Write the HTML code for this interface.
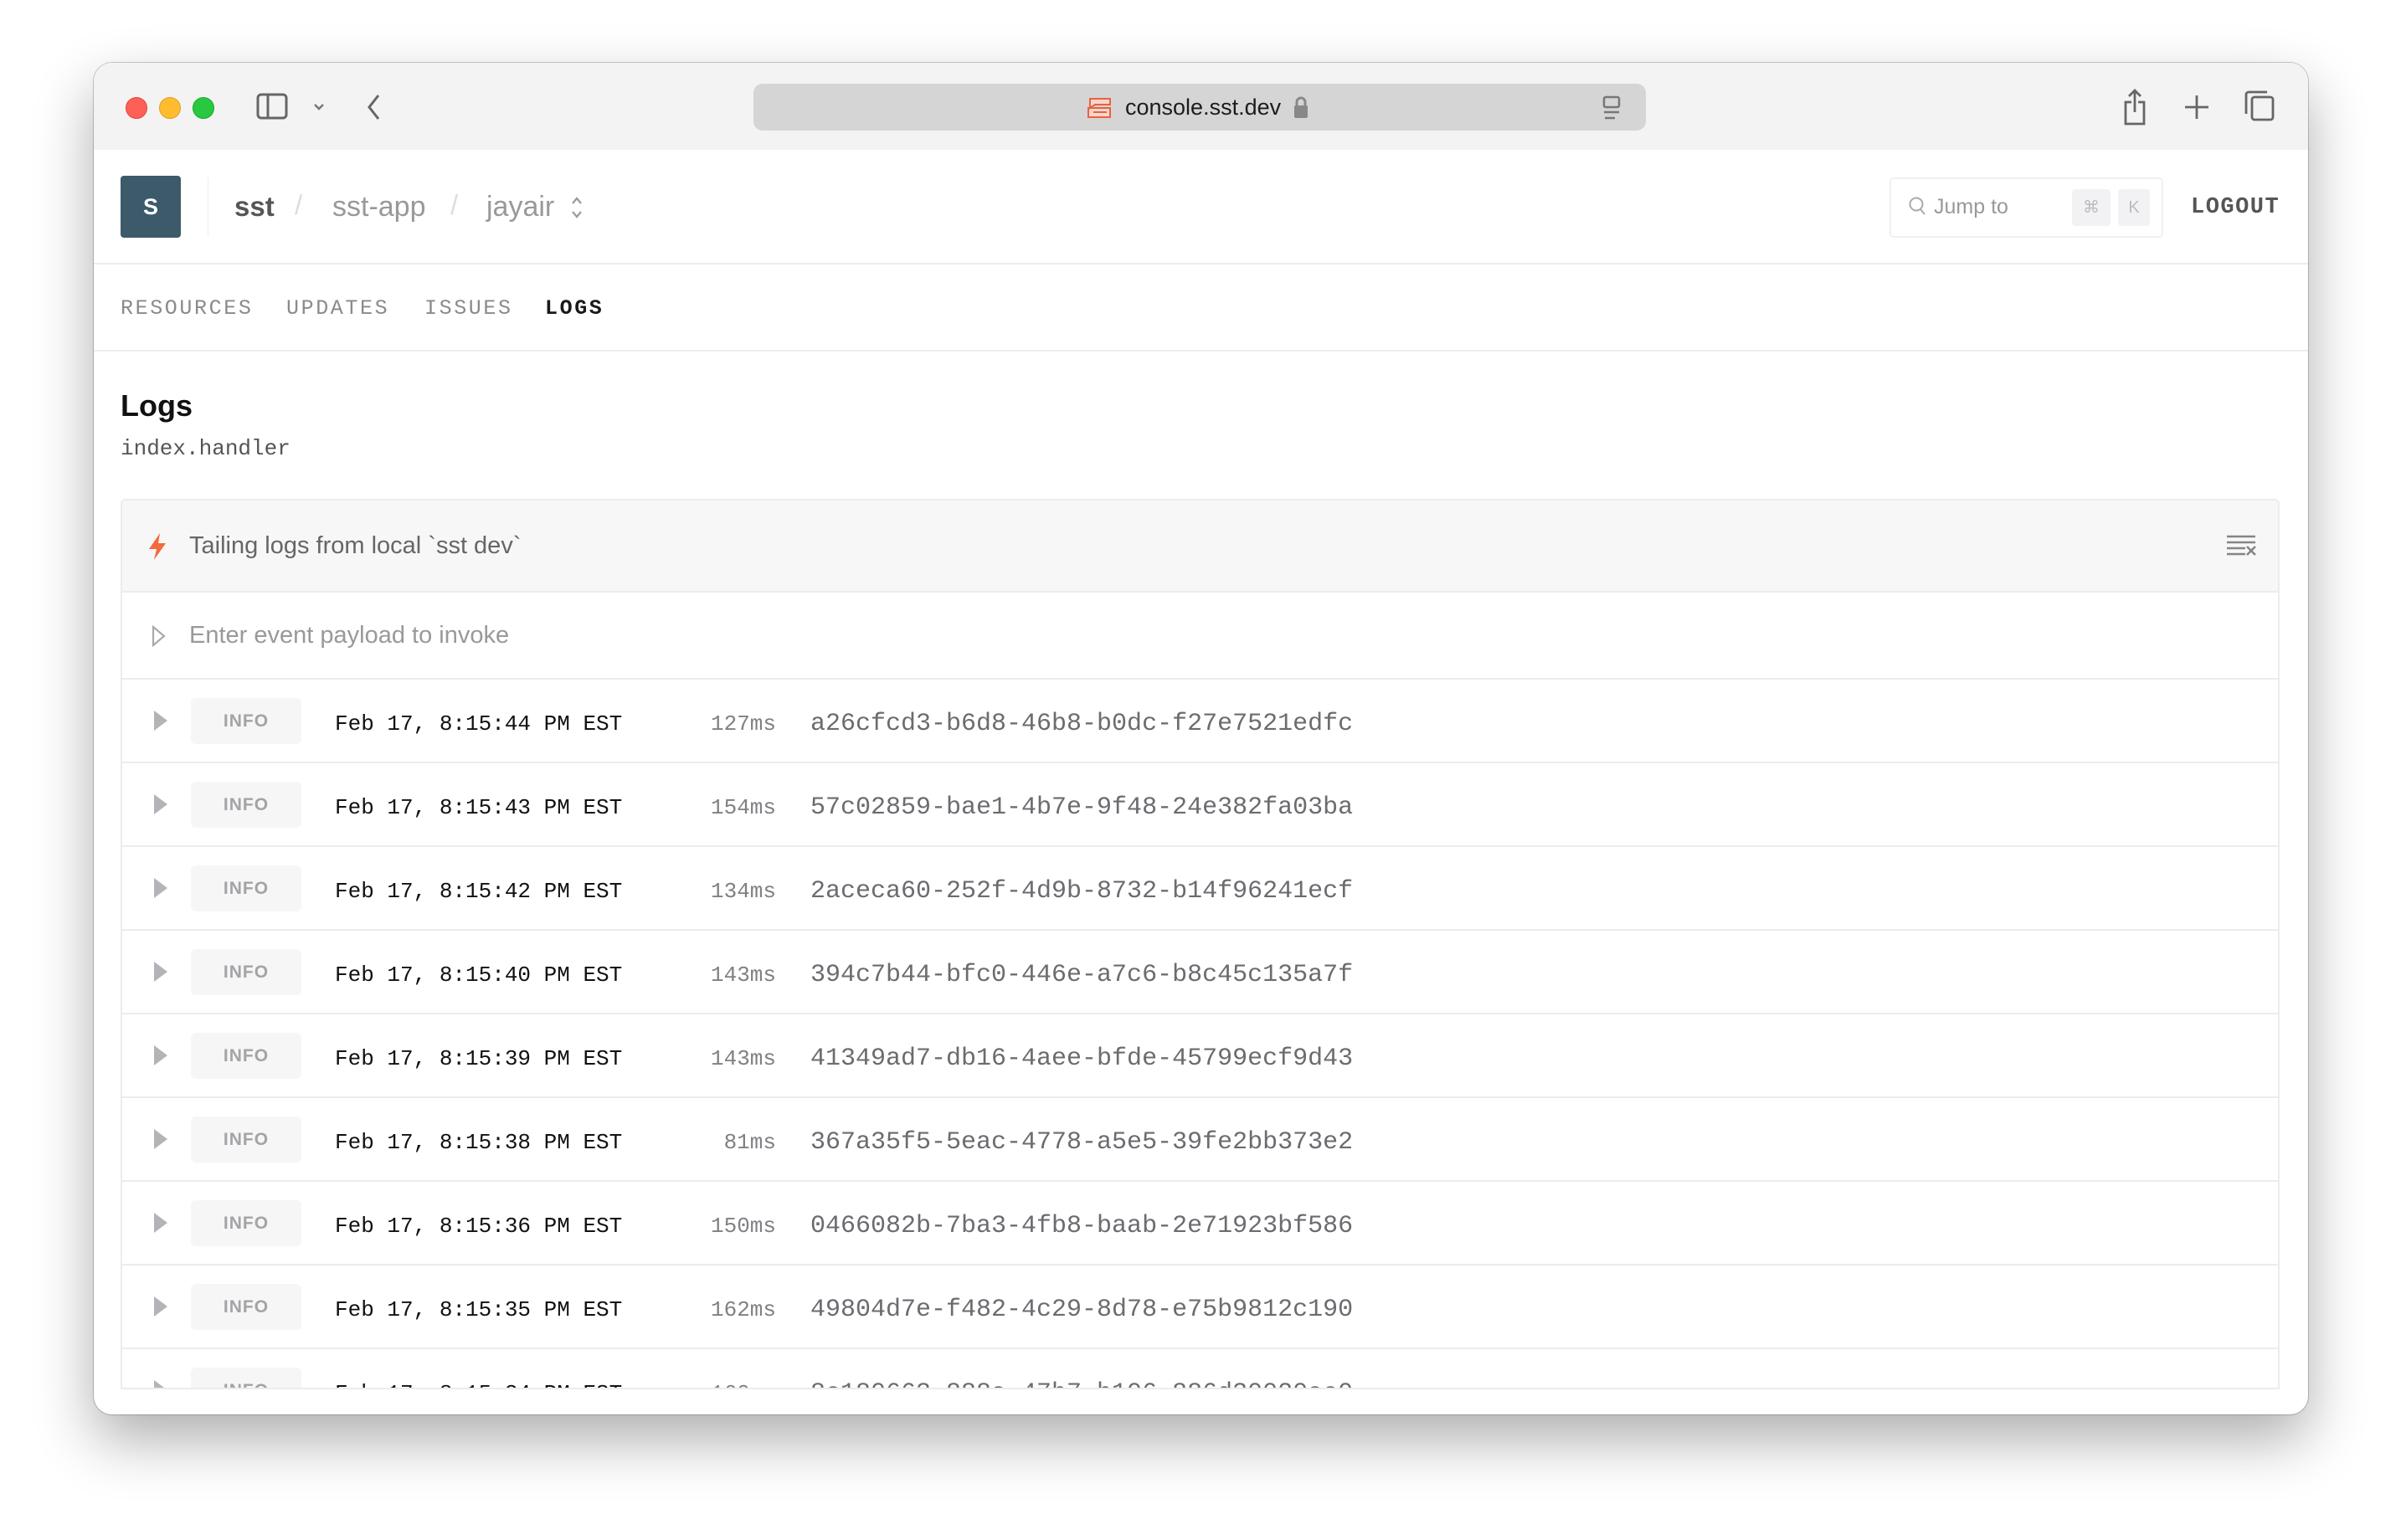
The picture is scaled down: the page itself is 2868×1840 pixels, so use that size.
<!DOCTYPE html>
<html><head><meta charset="utf-8"><style>
*{box-sizing:border-box;margin:0;padding:0}
body{width:2868px;height:1840px;background:#fff;position:relative;overflow:hidden;font-family:"Liberation Sans",sans-serif}
.win{position:absolute;left:112px;top:75px;width:2645px;height:1615px;border-radius:22px;background:#fff;overflow:hidden;box-shadow:0 30px 70px rgba(0,0,0,.32),0 0 0 1px rgba(0,0,0,.2)}
.tb{position:absolute;left:0;top:0;width:100%;height:104px;background:#f3f3f3}
.dot{position:absolute;top:116px;width:26px;height:26px;border-radius:50%}
.abs{position:absolute}
.mono{font-family:"Liberation Mono",monospace}
.tab{position:absolute;top:354px;font-family:"Liberation Mono",monospace;font-size:25px;letter-spacing:2.6px;color:#8a8a8e}
.row{position:absolute;left:0;width:100%;height:100px;border-top:2px solid #ececec}
.row .tri{position:absolute;left:38px;top:37px;width:0;height:0;border-left:16px solid #b4b4b8;border-top:12px solid transparent;border-bottom:12px solid transparent}
.row .badge{position:absolute;left:82px;top:22px;width:132px;height:55px;background:#f6f6f6;border-radius:6px;font-size:21px;font-weight:bold;color:#a3a3a8;text-align:center;line-height:55px;letter-spacing:1px}
.row .dt{position:absolute;left:254px;top:38px;font-family:"Liberation Mono",monospace;font-size:26px;color:#111}
.row .ms{position:absolute;left:640px;width:141px;text-align:right;top:38px;font-family:"Liberation Mono",monospace;font-size:26px;color:#808085}
.row .id{position:absolute;left:822px;top:36px;font-family:"Liberation Mono",monospace;font-size:30px;color:#6b6b70}
</style></head><body>
<div class="win">
 <div class="tb"></div>
</div>
<div class="dot" style="left:150px;background:#fe5f57;border:1px solid #e1463e"></div>
<div class="dot" style="left:190px;background:#febc2e;border:1px solid #dfa023"></div>
<div class="dot" style="left:230px;background:#28c840;border:1px solid #1aab29"></div>
<svg class="abs" style="left:306px;top:110px" width="96" height="36" viewBox="0 0 96 36"><rect x="2" y="3" width="34" height="28" rx="4" fill="none" stroke="#666" stroke-width="3"/><line x1="14" y1="3" x2="14" y2="31" stroke="#666" stroke-width="3"/><path d="M70 15l5 5 5-5" fill="none" stroke="#777" stroke-width="2.5"/></svg>
<svg class="abs" style="left:435px;top:110px" width="24" height="36"><path d="M17 4L6 18l11 14" fill="none" stroke="#666" stroke-width="3"/></svg>
<div class="abs" style="left:900px;top:100px;width:1066px;height:56px;background:#d5d5d5;border-radius:11px"></div>
<svg class="abs" style="left:1296px;top:116px" width="34" height="26" viewBox="0 0 34 26"><path d="M6 2h24v7H12l-6 4V2zM4 13h26v11H4z" fill="#f7d6cc" stroke="#e8623f" stroke-width="2"/><path d="M10 18h16" stroke="#e8623f" stroke-width="2"/></svg>
<div class="abs" style="left:1344px;top:113px;font-size:27px;color:#1c1c1c">console.sst.dev</div>
<svg class="abs" style="left:1544px;top:114px" width="20" height="28"><path d="M5 13V8a5 5 0 0110 0v5" fill="none" stroke="#888" stroke-width="3"/><rect x="2" y="12" width="16" height="15" rx="2" fill="#888"/></svg>
<svg class="abs" style="left:1914px;top:114px" width="24" height="32"><rect x="2" y="2" width="18" height="12" rx="2" fill="none" stroke="#777" stroke-width="2.5"/><path d="M2 20h18M3 27h12" stroke="#777" stroke-width="2.5"/></svg>
<svg class="abs" style="left:2534px;top:104px" width="36" height="48"><path d="M12 18H5v26h22V18h-7M16 4v26M9 11l7-7 7 7" fill="none" stroke="#666" stroke-width="2.8"/></svg>
<svg class="abs" style="left:2608px;top:112px" width="32" height="32"><path d="M16 2v28M2 16h28" stroke="#666" stroke-width="2.8"/></svg>
<svg class="abs" style="left:2680px;top:106px" width="40" height="40"><rect x="10" y="10" width="25" height="27" rx="3" fill="none" stroke="#666" stroke-width="2.8"/><path d="M3 30V7a3 3 0 013-3h22" fill="none" stroke="#666" stroke-width="2.8"/></svg>

<div class="abs" style="left:144px;top:210px;width:72px;height:74px;background:#3c5a6a;border-radius:4px;color:#fff;font-size:27px;font-weight:bold;text-align:center;line-height:74px">S</div>
<div class="abs" style="left:248px;top:212px;width:1px;height:70px;background:#eee"></div>
<div class="abs" style="left:280px;top:228px;font-size:33px;font-weight:bold;color:#555">sst</div>
<div class="abs" style="left:352px;top:226px;font-size:33px;color:#ddd">/</div>
<div class="abs" style="left:397px;top:228px;font-size:34px;color:#999">sst-app</div>
<div class="abs" style="left:538px;top:226px;font-size:33px;color:#ddd">/</div>
<div class="abs" style="left:581px;top:228px;font-size:34px;color:#999">jayair</div>
<svg class="abs" style="left:680px;top:232px" width="18" height="32"><path d="M4 11l5-6 5 6M4 21l5 6 5-6" fill="none" stroke="#999" stroke-width="2.2"/></svg>
<div class="abs" style="left:2257px;top:212px;width:327px;height:72px;border:2px solid #f0f0f0;border-radius:5px"></div>
<svg class="abs" style="left:2279px;top:234px" width="24" height="26"><circle cx="10" cy="10" r="7.5" fill="none" stroke="#aaa" stroke-width="2"/><path d="M15 16l5 6" stroke="#aaa" stroke-width="2"/></svg>
<div class="abs" style="left:2310px;top:233px;font-size:25px;color:#999">Jump to</div>
<div class="abs" style="left:2475px;top:226px;width:46px;height:44px;background:#f2f2f4;border-radius:4px;color:#bbb;font-size:20px;text-align:center;line-height:44px">⌘</div>
<div class="abs" style="left:2530px;top:226px;width:38px;height:44px;background:#f2f2f4;border-radius:4px;color:#bbb;font-size:20px;text-align:center;line-height:44px">K</div>
<div class="abs mono" style="left:2617px;top:233px;font-size:27px;font-weight:bold;color:#555;letter-spacing:1.5px">LOGOUT</div>
<div class="abs" style="left:112px;top:314px;width:2645px;height:2px;background:#ededed"></div>

<div class="tab" style="left:144px">RESOURCES</div>
<div class="tab" style="left:342px">UPDATES</div>
<div class="tab" style="left:507px">ISSUES</div>
<div class="tab" style="left:651px;color:#1a1a1a;font-weight:bold">LOGS</div>
<div class="abs" style="left:112px;top:418px;width:2645px;height:2px;background:#ededed"></div>

<div class="abs" style="left:144px;top:464px;font-size:36px;font-weight:bold;color:#111">Logs</div>
<div class="abs mono" style="left:144px;top:521px;font-size:26px;color:#555">index.handler</div>

<div class="abs" style="left:144px;top:596px;width:2579px;height:1063px;border:2px solid #ececec;border-bottom:none;border-radius:6px 6px 0 0;overflow:hidden">
 <div class="abs" style="left:0;top:0;width:100%;height:110px;background:#f7f7f7;border-bottom:2px solid #ececec"></div>
 <svg class="abs" style="left:30px;top:38px" width="24" height="34"><path d="M15 1L2 20h9l-3 13L22 13h-9z" fill="#f26a3d"/></svg>
 <div class="abs" style="left:80px;top:38px;font-size:29px;color:#666">Tailing logs from local `sst dev`</div>
 <svg class="abs" style="left:2512px;top:40px" width="40" height="30"><path d="M2 3h34M2 10h34M2 17h22M2 24h22M26 15l10 10M36 15L26 25" stroke="#858589" stroke-width="2.6"/></svg>
 <svg class="abs" style="left:34px;top:148px" width="20" height="28"><path d="M3 3l13 11L3 25z" fill="none" stroke="#aaa" stroke-width="2.2"/></svg>
 <div class="abs" style="left:80px;top:145px;font-size:29px;color:#999">Enter event payload to invoke</div>

 <div class="row" style="top:212px"><div class="tri"></div><div class="badge">INFO</div><div class="dt">Feb 17, 8:15:44 PM EST</div><div class="ms">127ms</div><div class="id">a26cfcd3-b6d8-46b8-b0dc-f27e7521edfc</div></div>
 <div class="row" style="top:312px"><div class="tri"></div><div class="badge">INFO</div><div class="dt">Feb 17, 8:15:43 PM EST</div><div class="ms">154ms</div><div class="id">57c02859-bae1-4b7e-9f48-24e382fa03ba</div></div>
 <div class="row" style="top:412px"><div class="tri"></div><div class="badge">INFO</div><div class="dt">Feb 17, 8:15:42 PM EST</div><div class="ms">134ms</div><div class="id">2aceca60-252f-4d9b-8732-b14f96241ecf</div></div>
 <div class="row" style="top:512px"><div class="tri"></div><div class="badge">INFO</div><div class="dt">Feb 17, 8:15:40 PM EST</div><div class="ms">143ms</div><div class="id">394c7b44-bfc0-446e-a7c6-b8c45c135a7f</div></div>
 <div class="row" style="top:612px"><div class="tri"></div><div class="badge">INFO</div><div class="dt">Feb 17, 8:15:39 PM EST</div><div class="ms">143ms</div><div class="id">41349ad7-db16-4aee-bfde-45799ecf9d43</div></div>
 <div class="row" style="top:712px"><div class="tri"></div><div class="badge">INFO</div><div class="dt">Feb 17, 8:15:38 PM EST</div><div class="ms">81ms</div><div class="id">367a35f5-5eac-4778-a5e5-39fe2bb373e2</div></div>
 <div class="row" style="top:812px"><div class="tri"></div><div class="badge">INFO</div><div class="dt">Feb 17, 8:15:36 PM EST</div><div class="ms">150ms</div><div class="id">0466082b-7ba3-4fb8-baab-2e71923bf586</div></div>
 <div class="row" style="top:912px"><div class="tri"></div><div class="badge">INFO</div><div class="dt">Feb 17, 8:15:35 PM EST</div><div class="ms">162ms</div><div class="id">49804d7e-f482-4c29-8d78-e75b9812c190</div></div>
 <div class="row" style="top:1012px"><div class="tri"></div><div class="badge">INFO</div><div class="dt">Feb 17, 8:15:34 PM EST</div><div class="ms">160ms</div><div class="id">8c180663-888a-47b7-b106-886d30020ac0</div></div>
</div>
<div class="abs" style="left:144px;top:1658px;width:2579px;height:2px;background:#ececec"></div>
</body></html>
